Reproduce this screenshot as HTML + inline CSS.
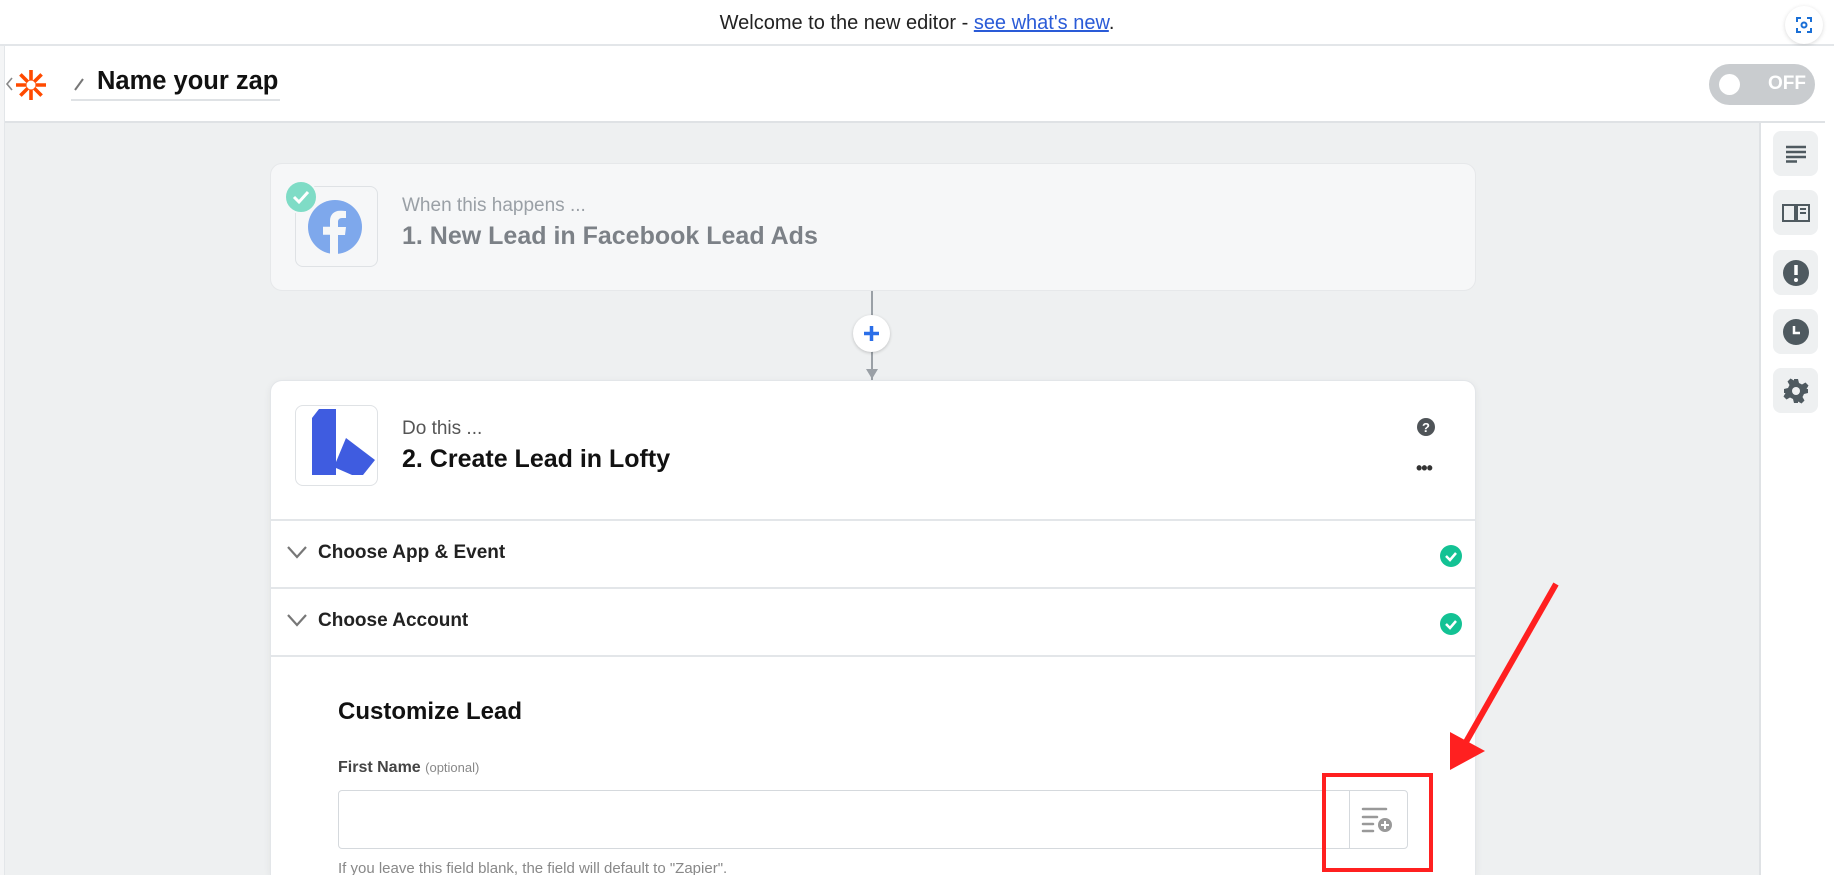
<!DOCTYPE html>
<html style="width:1834px;height:875px;overflow:hidden"><head><meta charset="utf-8"><style>
*{box-sizing:border-box;margin:0;padding:0}
body{width:1834px;height:875px;overflow:hidden;background:#fff;font-family:"Liberation Sans",sans-serif;position:relative}
.abs{position:absolute}
.banner{left:0;top:0;width:1834px;height:46px;background:#fff;border-bottom:2px solid #e3e6e9;text-align:center;font-size:20px;line-height:46px;color:#222}
.banner a{color:#2a5bd7;text-decoration:underline}
.hdr{left:5px;top:46px;width:1820px;height:77px;background:#fff;border-bottom:2px solid #dfe2e5}
.canvas{left:5px;top:123px;width:1754px;height:752px;background:#eef0f1}
.side{left:1759px;top:123px;width:75px;height:752px;background:#fff;border-left:2px solid #dfe2e5}
.sbtn{left:1773px;width:45px;height:45px;background:#eef0f1;border-radius:8px;display:flex;align-items:center;justify-content:center}
.card{left:270px;width:1206px;border-radius:12px}
.ibox{border:1px solid #dfe2e5;border-radius:8px;background:#fff}
.muted{color:#9aa0a6}
.row{left:270px;width:1206px;height:68px;border-top:2px solid #e3e6e9}
.row span{position:absolute;left:48px;top:21px;font-size:19px;font-weight:bold;color:#222}
.chev{position:absolute;left:16px;top:24px}
.chk{position:absolute;left:1170px;top:24px}
</style></head><body>
<div class="abs banner">Welcome to the new editor - <a>see what's new</a>.</div>
<div class="abs" style="left:1785px;top:6px;width:38px;height:38px;border-radius:50%;background:#fff;box-shadow:0 1px 4px rgba(0,0,0,.15)">
<svg width="38" height="38" viewBox="0 0 38 38" fill="none" stroke="#1a6fd6" stroke-width="2"><path d="M12 16v-4h4M22 12h4v4M26 22v4h-4M16 26h-4v-4"/><circle cx="19" cy="19" r="2.5"/></svg></div>
<div class="abs" style="left:0;top:46px;width:5px;height:829px;background:#f4f5f6;border-right:1px solid #e3e6e9"></div>
<div class="abs hdr"></div>
<svg class="abs" style="left:3px;top:73px" width="12" height="22" viewBox="0 0 12 22"><path d="M9 5L4 11l5 6" stroke="#888" stroke-width="1.6" fill="none"/></svg>
<svg class="abs" style="left:14px;top:68px" width="34" height="34" viewBox="0 0 34 34"><g stroke="#ff4a00" stroke-width="3.6"><path d="M17 2v30M2 17h30M6.4 6.4l21.2 21.2M27.6 6.4L6.4 27.6"/></g><circle cx="17" cy="17" r="4.5" fill="#fff"/></svg>
<svg class="abs" style="left:72px;top:76px" width="14" height="16"><path d="M3 14L11 3" stroke="#777" stroke-width="2"/></svg>
<div class="abs" style="left:97px;top:67px;font-size:25.5px;font-weight:bold;color:#111">Name your zap</div>
<div class="abs" style="left:71px;top:99px;width:209px;height:2px;background:#dfe2e5"></div>
<div class="abs" style="left:1709px;top:64px;width:106px;height:41px;border-radius:21px;background:#c9cccf">
<div class="abs" style="left:10px;top:10px;width:21px;height:21px;border-radius:50%;background:#fff"></div>
<div class="abs" style="left:59px;top:9px;font-size:19px;font-weight:bold;color:#fff">OFF</div></div>
<div class="abs canvas"></div>
<div class="abs side"></div>
<div class="abs sbtn" style="top:131px"><svg width="22" height="18"><g stroke="#4f5a60" stroke-width="2.4"><path d="M1 2h20M1 7h20M1 12h20M1 16.5h11"/></g></svg></div>
<div class="abs sbtn" style="top:190px"><svg width="28" height="22"><g stroke="#4f5a60" stroke-width="2" fill="none"><path d="M1 3h12v16H1zM15 3h12v16H15zM18 7h6M18 11h6"/></g></svg></div>
<div class="abs sbtn" style="top:250px"><svg width="28" height="28"><circle cx="14" cy="14" r="13" fill="#4f5a60"/><path d="M14 6v10" stroke="#fff" stroke-width="3.5"/><circle cx="14" cy="21" r="2" fill="#fff"/></svg></div>
<div class="abs sbtn" style="top:309px"><svg width="28" height="28"><circle cx="14" cy="14" r="13" fill="#4f5a60"/><path d="M12 8v7h6" stroke="#fff" stroke-width="2.5" fill="none"/></svg></div>
<div class="abs sbtn" style="top:368px"><svg width="26" height="26" viewBox="0 0 26 26"><g fill="#4f5a60"><path d="M11 1h4l1 4 3 1.5 3.5-2 3 3-2 3.5L25 11v4l-4 1-1.5 3 2 3.5-3 3-3.5-2L15 25h-4l-1-4-3-1.5-3.5 2-3-3 2-3.5L1 15v-4l4-1 1.5-3-2-3.5 3-3 3.5 2z"/></g><circle cx="13" cy="13" r="4" fill="#eef0f1"/></svg></div>

<div class="abs card" style="top:163px;height:128px;background:#f6f7f8;border:1px solid #e6e8ea"></div>
<div class="abs ibox" style="left:295px;top:186px;width:83px;height:81px;background:#f6f7f8"></div>
<svg class="abs" style="left:307px;top:199px" width="56" height="56" viewBox="0 0 56 56"><circle cx="28" cy="28" r="27" fill="#7ea8ec"/><path d="M31 56V36h7l1-8h-8v-5c0-2 1-4 4-4h4v-7c-1 0-3-.3-6-.3-6 0-10 4-10 10v6h-7v8h7v20z" fill="#f6f7f8"/></svg>
<div class="abs" style="left:284px;top:180px;width:34px;height:34px;border-radius:50%;background:#7fdcc6;border:2px solid #f6f7f8"></div>
<svg class="abs" style="left:291px;top:188px" width="20" height="18"><path d="M3 9l5 5 9-10" stroke="#fff" stroke-width="3" fill="none"/></svg>
<div class="abs muted" style="left:402px;top:195px;font-size:19px">When this happens ...</div>
<div class="abs" style="left:402px;top:222px;font-size:25px;font-weight:bold;color:#7c8187">1. New Lead in Facebook Lead Ads</div>

<div class="abs" style="left:871px;top:291px;width:2px;height:90px;background:#9aa0a6"></div>
<div class="abs" style="left:853px;top:315px;width:37px;height:37px;border-radius:50%;background:#fff;box-shadow:0 1px 3px rgba(0,0,0,.2)"></div>
<svg class="abs" style="left:861px;top:323px" width="21" height="21"><path d="M10.5 3v15M3 10.5h15" stroke="#2a6ee8" stroke-width="3.5"/></svg>
<svg class="abs" style="left:864px;top:367px" width="16" height="14"><path d="M2 2l6 10 6-10z" fill="#9aa0a6"/></svg>

<div class="abs card" style="top:380px;height:495px;border-bottom-left-radius:0;border-bottom-right-radius:0;background:#fff;border:1px solid #e3e6e9;border-bottom:none;box-shadow:0 2px 8px rgba(0,0,0,.06)"></div>
<div class="abs ibox" style="left:295px;top:405px;width:83px;height:81px"></div>
<svg class="abs" style="left:0;top:0" width="400" height="500"><path d="M312 418L319 409H336V475H312z" fill="#3f5ce0"/><path d="M336 462L346 438L375 460L363 475H352L336 468z" fill="#3f5ce0"/></svg>
<div class="abs" style="left:402px;top:418px;font-size:19px;color:#555">Do this ...</div>
<div class="abs" style="left:402px;top:445px;font-size:25px;font-weight:bold;color:#111">2. Create Lead in Lofty</div>
<svg class="abs" style="left:1417px;top:418px" width="18" height="18"><circle cx="9" cy="9" r="9" fill="#4f5458"/><text x="9" y="14" font-size="13" font-weight="bold" fill="#fff" text-anchor="middle" font-family="Liberation Sans">?</text></svg>
<div class="abs" style="left:1416px;top:458px;font-size:18px;font-weight:bold;color:#333;letter-spacing:-1px">•••</div>

<div class="abs row" style="top:519px"><svg class="chev" width="22" height="14"><path d="M2 2l9 10 9-10" stroke="#777" stroke-width="2.2" fill="none"/></svg><span>Choose App &amp; Event</span><svg class="chk" width="22" height="22"><circle cx="11" cy="11" r="11" fill="#13c294"/><path d="M6 11l4 4 6-7" stroke="#fff" stroke-width="2.5" fill="none"/></svg></div>
<div class="abs row" style="top:587px"><svg class="chev" width="22" height="14"><path d="M2 2l9 10 9-10" stroke="#777" stroke-width="2.2" fill="none"/></svg><span>Choose Account</span><svg class="chk" width="22" height="22"><circle cx="11" cy="11" r="11" fill="#13c294"/><path d="M6 11l4 4 6-7" stroke="#fff" stroke-width="2.5" fill="none"/></svg></div>
<div class="abs" style="left:270px;top:655px;width:1206px;height:2px;background:#e3e6e9"></div>

<div class="abs" style="left:338px;top:698px;font-size:24px;font-weight:bold;color:#111">Customize Lead</div>
<div class="abs" style="left:338px;top:759px;font-size:16px;font-weight:bold;color:#444">First Name <span style="font-size:13px;font-weight:normal;color:#888">(optional)</span></div>
<div class="abs" style="left:338px;top:790px;width:1070px;height:59px;border:1px solid #d5d9dd;border-radius:4px"></div>
<div class="abs" style="left:1349px;top:791px;width:1px;height:57px;background:#d5d9dd"></div>
<svg class="abs" style="left:1360px;top:804px" width="36" height="30"><g stroke="#999" stroke-width="2.5" stroke-linecap="round"><path d="M3 5h23M3 13h14M3 20h10M3 27h10"/></g><circle cx="25" cy="21" r="7" fill="#999"/><path d="M25 17v8M21 21h8" stroke="#fff" stroke-width="2"/></svg>
<div class="abs" style="left:338px;top:860px;font-size:15px;color:#888">If you leave this field blank, the field will default to "Zapier".</div>

<div class="abs" style="left:1322px;top:773px;width:111px;height:99px;border:4px solid #ff2020"></div>
<svg class="abs" style="left:0;top:0" width="1834" height="875"><path d="M1556 584L1466 742" stroke="#ff2020" stroke-width="6"/><path d="M1450 770l0-38 35 19z" fill="#ff2020"/></svg>
</body></html>
